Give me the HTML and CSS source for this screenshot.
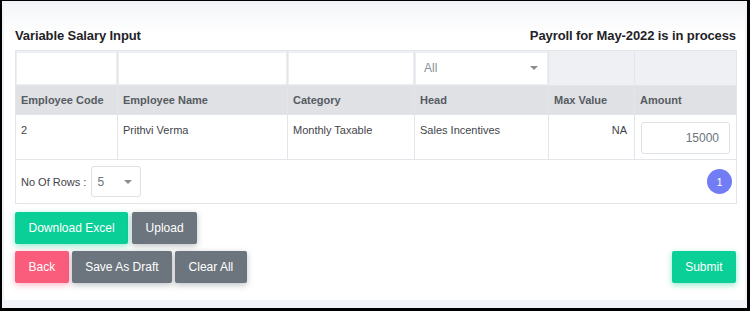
FILE: index.html
```html
<!DOCTYPE html>
<html lang="en">

<head>
  <meta charset="UTF-8">
  <meta name="viewport" content="width=device-width, initial-scale=1.0">
  <title>Variable Salary Input</title>
  <link rel="stylesheet" href="styles.css">
</head>

<body>

  <div id="frame">
    <div id="card">

      <div id="card-head">
        <div class="title">Variable Salary Input</div>
        <div class="title">Payroll for May-2022 is in process</div>
      </div>

      <table id="salary-table">
        <colgroup>
          <col style="width: 102px">
          <col style="width: 170px">
          <col style="width: 127px">
          <col style="width: 134px">
          <col style="width: 86px">
          <col style="width: 102px">
        </colgroup>
        <tr class="filter-row">
          <td><div class="filter-input"></div></td>
          <td><div class="filter-input"></div></td>
          <td><div class="filter-input"></div></td>
          <td>
            <div class="filter-input select">
              <span>All</span>
              <span class="caret"></span>
            </div>
          </td>
          <td></td>
          <td></td>
        </tr>
        <tr class="head-row">
          <th>Employee Code</th>
          <th>Employee Name</th>
          <th>Category</th>
          <th>Head</th>
          <th>Max Value</th>
          <th>Amount</th>
        </tr>
        <tr class="data-row">
          <td>2</td>
          <td>Prithvi Verma</td>
          <td>Monthly Taxable</td>
          <td>Sales Incentives</td>
          <td class="num">NA</td>
          <td><div class="amount-input">15000</div></td>
        </tr>
        <tr class="foot-row">
          <td colspan="6">
            <div class="foot">
              <div class="rows">
                No Of Rows :
                <div class="rows-select">
                  <span>5</span>
                  <span class="caret"></span>
                </div>
              </div>
              <div class="page">1</div>
            </div>
          </td>
        </tr>
      </table>

      <div class="btn-row">
        <button class="btn success">Download Excel</button>
        <button class="btn secondary">Upload</button>
      </div>

      <div class="btn-row split">
        <div class="btn-group">
          <button class="btn danger">Back</button>
          <button class="btn secondary">Save As Draft</button>
          <button class="btn secondary">Clear All</button>
        </div>
        <button class="btn success">Submit</button>
      </div>

    </div>
  </div>

</body>

</html>
```

FILE: styles.css
```css
* {
  margin: 0;
  padding: 0;
  box-sizing: border-box;
  font-family: 'Liberation Sans', Arial, sans-serif;
}

html,
body {
  height: 100%;
}

body {
  background-color: #f1f3f8;
}

#frame {
  height: 311px;
  border-style: solid;
  border-color: #000;
  border-width: 1px 3px 3px 2px;
  padding: 3px 2px 8px 2px;
}

#card {
  height: 100%;
  background: linear-gradient(#f5f6f8, #fff 32px);
  border-radius: 3px;
  padding: 23px 9px 0 11px;
}

#card-head {
  display: flex;
  justify-content: space-between;
  align-items: center;
  height: 16px;
  margin-bottom: 7px;
}

.title {
  font-size: 13px;
  font-weight: bold;
  color: #1f2328;
  letter-spacing: -0.1px;
}

#salary-table {
  width: 721px;
  table-layout: fixed;
  border-collapse: collapse;
  font-size: 11px;
  color: #3f444a;
}

#salary-table td,
#salary-table th {
  border: 1px solid #e2e5e9;
}

.filter-row td {
  height: 35px;
  padding: 0;
  background-color: #eef0f4;
}

.filter-input {
  height: 33px;
  background-color: #fff;
  border: 1px solid #eceef1;
}

.filter-input.select {
  display: flex;
  align-items: center;
  justify-content: space-between;
  padding: 0 9px 0 8px;
  font-size: 12px;
  color: #8a9198;
}

.caret {
  width: 0;
  height: 0;
  border-left: 4px solid transparent;
  border-right: 4px solid transparent;
  border-top: 4px solid #8c8c8c;
}

.head-row th {
  height: 29px;
  padding: 0 5px;
  text-align: left;
  background-color: #dfe1e5;
  color: #565b61;
  font-weight: bold;
}

.data-row td {
  padding: 7px 5px 5px;
  vertical-align: top;
  line-height: 17px;
}

.data-row td.num {
  text-align: right;
  padding-right: 7px;
}

.amount-input {
  height: 32px;
  margin: 0 1px;
  border: 1px solid #dee2e6;
  border-radius: 3px;
  padding: 0 10px;
  font-size: 12px;
  line-height: 30px;
  text-align: right;
  color: #6c757d;
}

.foot-row td {
  height: 44px;
  padding: 0 4px 0 5px;
}

.foot {
  display: flex;
  align-items: center;
  justify-content: space-between;
}

.rows {
  display: flex;
  align-items: center;
  gap: 5px;
  color: #3f444a;
}

.rows-select {
  width: 50px;
  height: 31px;
  border: 1px solid #dee2e6;
  border-radius: 3px;
  display: flex;
  align-items: center;
  justify-content: space-between;
  padding: 0 8px 0 5px;
  font-size: 12px;
  color: #6c757d;
}

.page {
  width: 25px;
  height: 25px;
  border-radius: 50%;
  background-color: #727cf5;
  color: #fff;
  font-size: 11px;
  display: flex;
  align-items: center;
  justify-content: center;
}

.btn-row {
  display: flex;
  gap: 4px;
  margin-top: 8px;
}

.btn-row.split {
  margin-top: 7px;
  justify-content: space-between;
}

.btn-group {
  display: flex;
  gap: 3px;
}

.btn {
  height: 32px;
  padding: 0 13.5px;
  border: none;
  border-radius: 2px;
  font-size: 12px;
  color: #fff;
  cursor: pointer;
}

.btn.success {
  background-color: #0acf97;
  box-shadow: 0 2px 6px 0 rgba(10, 207, 151, .45);
}

.btn.secondary {
  background-color: #6c757d;
  box-shadow: 0 2px 6px 0 rgba(108, 117, 125, .45);
}

.btn.danger {
  background-color: #fa5c7c;
  box-shadow: 0 2px 6px 0 rgba(250, 92, 124, .45);
}
```
